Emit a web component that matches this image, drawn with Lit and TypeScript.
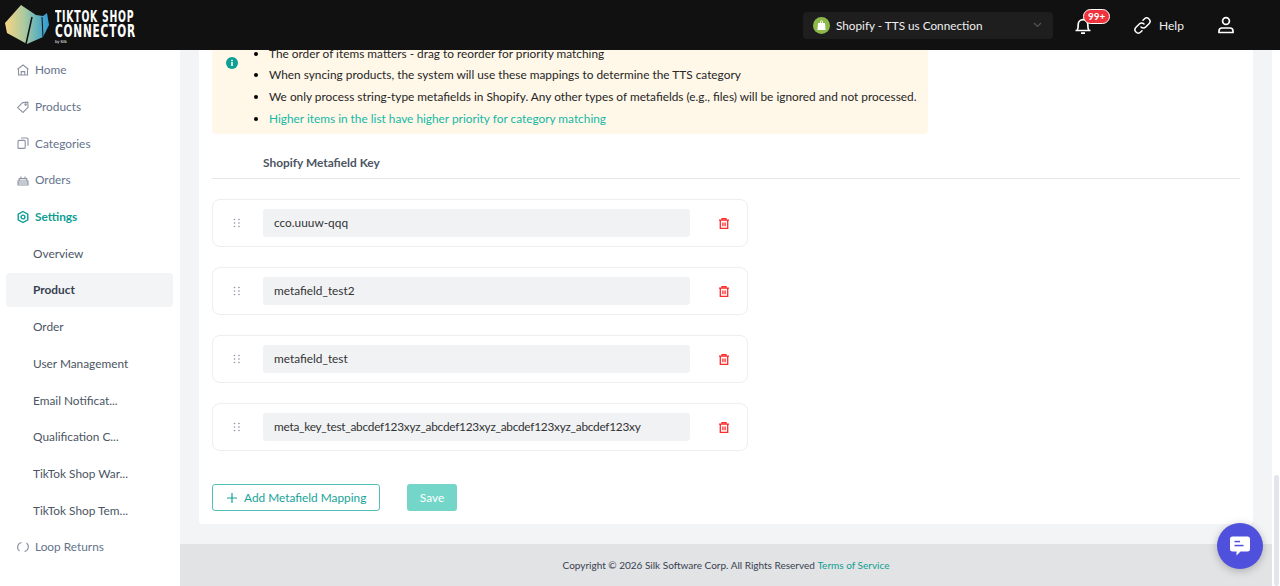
import { LitElement, html, css, svg } from "lit";
import { customElement } from "lit/decorators.js";

const nav = [
  { label: "Home", icon: svg`<path d="M1.500 6.200 7 2l5.500 4.200M2.500 5.600V12h9V5.600M5.200 12V8.600h3.600V12"/>` },
  { label: "Products", icon: svg`<path d="M1.600 7.600 6.600 2.600 11.800 2.200 12 7.400 7 12.400Z"/><circle cx="9.600" cy="4.600" r=".7"/>` },
  { label: "Categories", icon: svg`<rect x="2" y="4.400" width="7.200" height="8" rx="1"/><path d="M5 2h6a1 1 0 0 1 1 1v6.800"/>` },
  { label: "Orders", icon: svg`<path d="M2 8h10v4H2zM3.200 8V5.600h7.600V8M5 5.600V3.400M9 5.600V3.400M2 10h10"/>` },
];
const subs = ["Overview", "Product", "Order", "User Management", "Email Notificat...", "Qualification C...", "TikTok Shop War...", "TikTok Shop Tem..."];
const keys = ["cco.uuuw-qqq", "metafield_test2", "metafield_test", "meta_key_test_abcdef123xyz_abcdef123xyz_abcdef123xyz_abcdef123xy"];
const notes = [
  "The order of items matters - drag to reorder for priority matching",
  "When syncing products, the system will use these mappings to determine the TTS category",
  "We only process string-type metafields in Shopify. Any other types of metafields (e.g., files) will be ignored and not processed.",
];

@customElement("app-root")
export class AppRoot extends LitElement {
  static styles = css`
    :host { display: block; height: 586px; width: 1280px; overflow: hidden; font-family: Lato, "Noto Sans", sans-serif; background: #fff; }
    * { box-sizing: border-box; }
    .top { height: 50px; background: #111; display: flex; align-items: center; color: #fff; }
    .brand { display: flex; align-items: center; width: 790px; padding-left: 5px; gap: 6px; }
    .wordmark { display: flex; flex-direction: column; font-family: "DejaVu Sans Condensed", "DejaVu Sans", sans-serif; font-weight: 700; color: #fff; margin-top: 4px; white-space: nowrap; }
    .w1 { display: block; font-size: 15px; line-height: 14px; letter-spacing: 1.100px; transform: scaleX(.69); transform-origin: left center; }
    .w2 { display: block; font-size: 17.500px; line-height: 15px; letter-spacing: 1.200px; transform: scaleX(.67); transform-origin: left center; }
    .by { font-size: 4px; line-height: 6px; font-weight: 400; }
    .conn { margin-left: 13px; width: 250px; height: 27px; border-radius: 4px; background: #1e1e1e; display: flex; align-items: center; padding: 0 11px 0 10px; font-size: 11.750px; color: #f0f0f0; gap: 6px; }
    .conn .name { flex: 1; }
    .shop { width: 17px; height: 17px; border-radius: 50%; background: #8db84a; display: flex; align-items: center; justify-content: center; }
    .bell { margin-left: 20px; width: 40px; height: 30px; position: relative; display: flex; align-items: center; }
    .badge { position: absolute; left: 10px; top: 7px; margin-top: -8px; height: 15px; padding: 0 4px; border-radius: 8px; background: #f0323c; border: 1px solid #fff; font-size: 10px; font-weight: 700; line-height: 13px; color: #fff; white-space: nowrap; }
    .help { margin-left: 21px; display: flex; align-items: center; gap: 8px; font-size: 12px; color: #f0f0f0; width: 50px; }
    .user { margin-left: 33px; display: flex; }
    .body { display: flex; height: 536px; }
    .side { width: 180px; flex: none; background: #fff; padding: 3px 7px 0 6px; color: #64748b; font-size: 11.850px; }
    .item { height: 33.700px; margin-bottom: 3px; display: flex; align-items: center; padding-left: 10px; gap: 5px; white-space: nowrap; }
    .item svg { flex: none; fill: none; stroke: #8b93a1; stroke-width: 1.100; }
    .item.on { color: #0d9e94; font-weight: 700; }
    .item.on svg { stroke: #0d9e94; stroke-width: 1.400; }
    .sub { padding-left: 27px; color: #4b5563; }
    .sub.on { background: #f3f4f6; border-radius: 4px; color: #374151; font-weight: 700; }
    .main { flex: 1; background: #f3f4f5; display: flex; flex-direction: column; overflow: hidden; }
    .content { flex: 1; padding: 0 19px; overflow: hidden; }
    .card { background: #fff; height: 474px; padding: 0 13px; border-radius: 0 0 4px 4px; }
    .alert { width: 716px; height: 84px; background: #fff7e8; border-radius: 0 0 4px 4px; position: relative; overflow: hidden; font-size: 11.850px; color: #262626; }
    .alert ul { margin: -7.500px 0 0; padding: 0 0 0 57px; }
    .alert li { height: 21.700px; line-height: 21.700px; white-space: nowrap; }
    .alert li.link { color: #14b8a6; }
    .alert li::marker { color: #000; }
    .info { position: absolute; left: 14px; top: 7px; }
    .head { height: 45px; padding: 20px 0 0 51px; border-bottom: 1px solid #e5e7eb; font-size: 11.900px; font-weight: 700; color: #4b5563; line-height: 17px; }
    .rows { display: flex; flex-direction: column; gap: 20px; margin-top: 20px; width: 536px; }
    .row { height: 48px; border: 1px solid #eceef0; border-radius: 8px; display: flex; align-items: center; }
    .grip { width: 50px; flex: none; display: flex; justify-content: center; margin-left: -1px; margin-right: 1px; }
    .field { width: 427px; height: 28px; background: #f1f2f4; border-radius: 3px; padding-left: 11px; font-size: 11.850px; line-height: 28px; color: #333; white-space: nowrap; overflow: hidden; }
    .field.long { letter-spacing: -.26px; }
    .trash { margin-left: 29px; display: flex; }
    .actions { display: flex; gap: 27px; margin-top: 33px; }
    .add { width: 168px; height: 27px; border: 1px solid #55c0bb; border-radius: 3px; display: flex; align-items: center; padding-left: 14px; gap: 7px; color: #17a398; font-size: 11.850px; white-space: nowrap; }
    .save { width: 50px; height: 27px; background: #74d6c8; border-radius: 3px; color: #fff; font-size: 11.850px; display: flex; align-items: center; justify-content: center; }
    .foot { height: 42px; background: #e2e3e5; font-size: 10px; color: #374151; display: flex; align-items: center; justify-content: center; flex: none; white-space: pre; }
    .foot span { color: #0d9e94; }
    .bar { width: 8px; flex: none; background: #fff; position: relative; }
    .thumb { position: absolute; right: 1px; top: 425px; width: 5px; height: 111px; background: #e4e5ec; border-radius: 3px; }
    .chat { position: absolute; left: 1217px; top: 523px; width: 46px; height: 46px; border-radius: 50%; background: #4f50dc; display: flex; align-items: center; justify-content: center; box-shadow: 0 2px 8px rgba(0,0,0,.25); }
  `;

  render() {
    const trash = html`<svg width="10" height="11" viewBox="0 0 10 11" fill="none" stroke="#ff2a2a" stroke-width="1.300"><path d="M0 2.200h10M3 2V.7h4V2M1.300 2.200v8.200h7.400V2.200M3.900 4.400v3.800M6.100 4.400v3.800"/></svg>`;
    const grip = html`<svg width="8" height="10" viewBox="0 0 8 10" fill="#8b93a1"><circle cx="1.500" cy="1.500" r=".8"/><circle cx="6" cy="1.500" r=".8"/><circle cx="1.500" cy="5" r=".8"/><circle cx="6" cy="5" r=".8"/><circle cx="1.500" cy="8.500" r=".8"/><circle cx="6" cy="8.500" r=".8"/></svg>`;
    return html`
      <header class="top">
        <div class="brand">
          <svg width="44" height="40" viewBox="0 0 44 40">
            <defs><linearGradient id="g" x1="0" x2="1" y1="0" y2="0"><stop offset="0" stop-color="#f8d583"/><stop offset=".45" stop-color="#a9c9a0"/><stop offset=".75" stop-color="#5fb0bd"/><stop offset="1" stop-color="#2f9bd6"/></linearGradient></defs>
            <path d="M0 18 16 0 31 10 38 11 42 8 44 20 38 32 22 39 2 28Z" fill="url(#g)"/>
            <path d="M27 12 21 39" stroke="#111" stroke-width="1.500"/><path d="M37 12 38 32" stroke="#111" stroke-width="1"/>
          </svg>
          <div class="wordmark"><span class="w1">TIKTOK SHOP</span><span class="w2">CONNECTOR</span><span class="by">by Silk</span></div>
        </div>
        <div class="conn">
          <span class="shop"><svg width="9" height="10" viewBox="0 0 9 10" fill="#fff"><path d="M1 3h7l.6 7H.4zM3 3V2a1.500 1.500 0 0 1 3 0v1H5.200V2a.7.7 0 0 0-1.400 0v1z"/></svg></span>
          <span class="name">Shopify - TTS us Connection</span>
          <svg width="9" height="6" viewBox="0 0 9 6" fill="none" stroke="#555" stroke-width="1.100"><path d="M1 1l3.500 3.500L8 1"/></svg>
        </div>
        <div class="bell">
          <svg width="20" height="20" viewBox="0 0 20 20" fill="none" stroke="#fff" stroke-width="1.700"><path d="M2.500 15.500h15M4.200 15.500c1-1.500 1-3 1-6a4.800 4.800 0 0 1 9.600 0c0 3 0 4.500 1 6M8 18.200h4"/></svg>
          <span class="badge">99+</span>
        </div>
        <div class="help">
          <svg width="17" height="17" viewBox="0 0 17 17" fill="none" stroke="#fff" stroke-width="1.500" stroke-linecap="round"><path d="M7 10a3.300 3.300 0 0 0 4.700 0l3.300-3.300a3.300 3.300 0 0 0-4.700-4.700L9 3.300"/><path d="M10 7a3.300 3.300 0 0 0-4.700 0L2 10.300A3.300 3.300 0 0 0 6.700 15L8 13.700"/></svg>
          <span>Help</span>
        </div>
        <div class="user">
          <svg width="18" height="18" viewBox="0 0 18 18" fill="none" stroke="#fff" stroke-width="1.700"><circle cx="9" cy="5" r="3.400"/><path d="M2 16.500v-1.500a3 3 0 0 1 3-3h8a3 3 0 0 1 3 3v1.500z"/></svg>
        </div>
      </header>
      <div class="body">
        <nav class="side">
          ${nav.map((n) => html`<div class="item"><svg width="14" height="14" viewBox="0 0 14 14">${n.icon}</svg>${n.label}</div>`)}
          <div class="item on"><svg width="14" height="14" viewBox="0 0 14 14"><path d="M7 1.500l4.800 2.750v5.500L7 12.500 2.200 9.750v-5.500z"/><circle cx="7" cy="7" r="1.900"/></svg>Settings</div>
          ${subs.map((s, i) => html`<div class="item sub ${i === 1 ? "on" : ""}">${s}</div>`)}
          <div class="item"><svg width="14" height="14" viewBox="0 0 14 14"><path d="M5.500 2.500A4.800 4.800 0 0 0 3.500 11M8.500 11.500A4.800 4.800 0 0 0 10.500 3"/></svg>Loop Returns</div>
        </nav>
        <main class="main">
          <div class="content">
            <section class="card">
              <div class="alert">
                <svg class="info" width="12" height="12" viewBox="0 0 12 12"><circle cx="6" cy="6" r="6" fill="#0d9e94"/><rect x="5.200" y="5" width="1.600" height="4" fill="#fff"/><rect x="5.200" y="2.800" width="1.600" height="1.500" fill="#fff"/></svg>
                <ul>
                  ${notes.map((n) => html`<li>${n}</li>`)}
                  <li class="link">Higher items in the list have higher priority for category matching</li>
                </ul>
              </div>
              <div class="head">Shopify Metafield Key</div>
              <div class="rows">
                ${keys.map((k, i) => html`<div class="row"><span class="grip">${grip}</span><div class="field ${i === 3 ? "long" : ""}">${k}</div><span class="trash">${trash}</span></div>`)}
              </div>
              <div class="actions">
                <div class="add"><svg width="10" height="10" viewBox="0 0 10 10" stroke="#17a398" stroke-width="1.200"><path d="M5 0v10M0 5h10"/></svg>Add Metafield Mapping</div>
                <div class="save">Save</div>
              </div>
            </section>
          </div>
          <footer class="foot">Copyright © 2026 Silk Software Corp. All Rights Reserved <span>Terms of Service</span></footer>
        </main>
        <div class="bar"><div class="thumb"></div></div>
      </div>
      <div class="chat"><svg width="20" height="20" viewBox="0 0 20 20"><path d="M2.500 0.500h15A2.500 2.500 0 0 1 20 3v10a2.500 2.500 0 0 1-2.500 2.500H10.500L6.500 19.500V15.500h-4A2.500 2.500 0 0 1 0 13V3A2.500 2.500 0 0 1 2.500 0.500z" fill="#fff"/><rect x="4.500" y="4.800" width="5.500" height="1.500" fill="#4f50dc"/><rect x="4.500" y="8.800" width="9" height="1.500" fill="#4f50dc"/></svg></div>
    `;
  }
}
